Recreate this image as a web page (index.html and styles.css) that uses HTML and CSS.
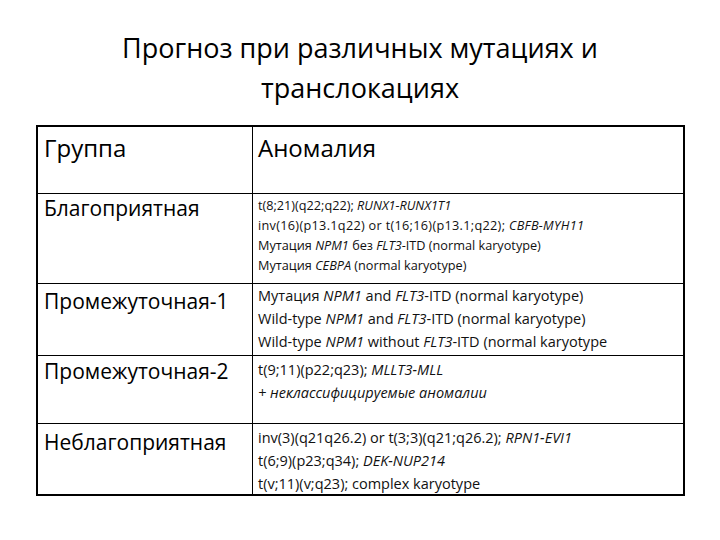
FILE: index.html
```
<!DOCTYPE html>
<html lang="ru">
<head>
<meta charset="utf-8">
<link rel="stylesheet" href="styles.css">
</head>
<body>
<h1 class="title">Прогноз при различных мутациях и<br>транслокациях</h1>
<div class="grid">
  <div class="cell left head">Группа</div>
  <div class="cell right head">Аномалия</div>

  <div class="cell left r1 top">Благоприятная</div>
  <div class="cell right r1 top small">
    <div>t(8;21)(q22;q22); <i>RUNX1-RUNX1T1</i></div>
    <div class="wide">inv(16)(p13.1q22) or t(16;16)(p13.1;q22); <i>CBFB-MYH11</i></div>
    <div>Мутация <i>NPM1</i> без <i>FLT3</i>-ITD (normal karyotype)</div>
    <div>Мутация <i>CEBPA</i> (normal karyotype)</div>
  </div>

  <div class="cell left r2 top">Промежуточная-1</div>
  <div class="cell right r2 top mid">
    <div>Мутация <i>NPM1</i> and <i>FLT3</i>-ITD (normal karyotype)</div>
    <div>Wild-type <i>NPM1</i> and <i>FLT3</i>-ITD (normal karyotype)</div>
    <div>Wild-type <i>NPM1</i> without <i>FLT3</i>-ITD (normal karyotype</div>
  </div>

  <div class="cell left r3 top">Промежуточная-2</div>
  <div class="cell right r3 top mid">
    <div>t(9;11)(p22;q23); <i>MLLT3-MLL</i></div>
    <div><i>+ неклассифицируемые аномалии</i></div>
  </div>

  <div class="cell left r4 top">Неблагоприятная</div>
  <div class="cell right r4 top mid">
    <div>inv(3)(q21q26.2) or t(3;3)(q21;q26.2); <i>RPN1-EVI1</i></div>
    <div>t(6;9)(p23;q34); <i>DEK-NUP214</i></div>
    <div>t(v;11)(v;q23); complex karyotype</div>
  </div>
</div>
</body>
</html>
```
FILE: styles.css
```
html, body {
  margin: 0;
  padding: 0;
  background: #ffffff;
}
body {
  width: 720px;
  height: 540px;
  font-family: "Open Sans", "Noto Sans", sans-serif;
  color: #000;
  overflow: hidden;
}
.title {
  margin: 0;
  padding-top: 28px;
  font-weight: 400;
  font-size: 27px;
  line-height: 40px;
  text-align: center;
  color: #000;
  height: 97px;
}
.grid {
  box-sizing: border-box;
  margin-left: 36px;
  width: 649px;
  border: 2px solid #000;
  display: grid;
  grid-template-columns: 214px 1fr;
  grid-template-rows: 66px 90px 72px 68px 71px;
}
.cell {
  box-sizing: border-box;
  white-space: nowrap;
  overflow: hidden;
}
.top {
  border-top: 1px solid #000;
}
.right {
  border-left: 1px solid #000;
  padding-left: 5px;
}
.left {
  padding-left: 6px;
  font-size: 21px;
  line-height: 26px;
}
.head {
  font-size: 24px;
  line-height: 30px;
  padding-top: 6px;
}
.small {
  font-size: 12.7px;
  line-height: 20px;
  color: #111;
}
.wide {
  letter-spacing: 0.3px;
}
.mid {
  font-size: 14.5px;
  line-height: 23px;
  color: #111;
}
.left.r1 { padding-top: 1px; }
.right.r1 { padding-top: 1px; }
.left.r2 { padding-top: 4px; }
.right.r2 { padding-top: 0px; }
.left.r3 { padding-top: 2px; }
.right.r3 { padding-top: 2px; }
.left.r4 { padding-top: 5px; }
.right.r4 { padding-top: 2px; }
```
